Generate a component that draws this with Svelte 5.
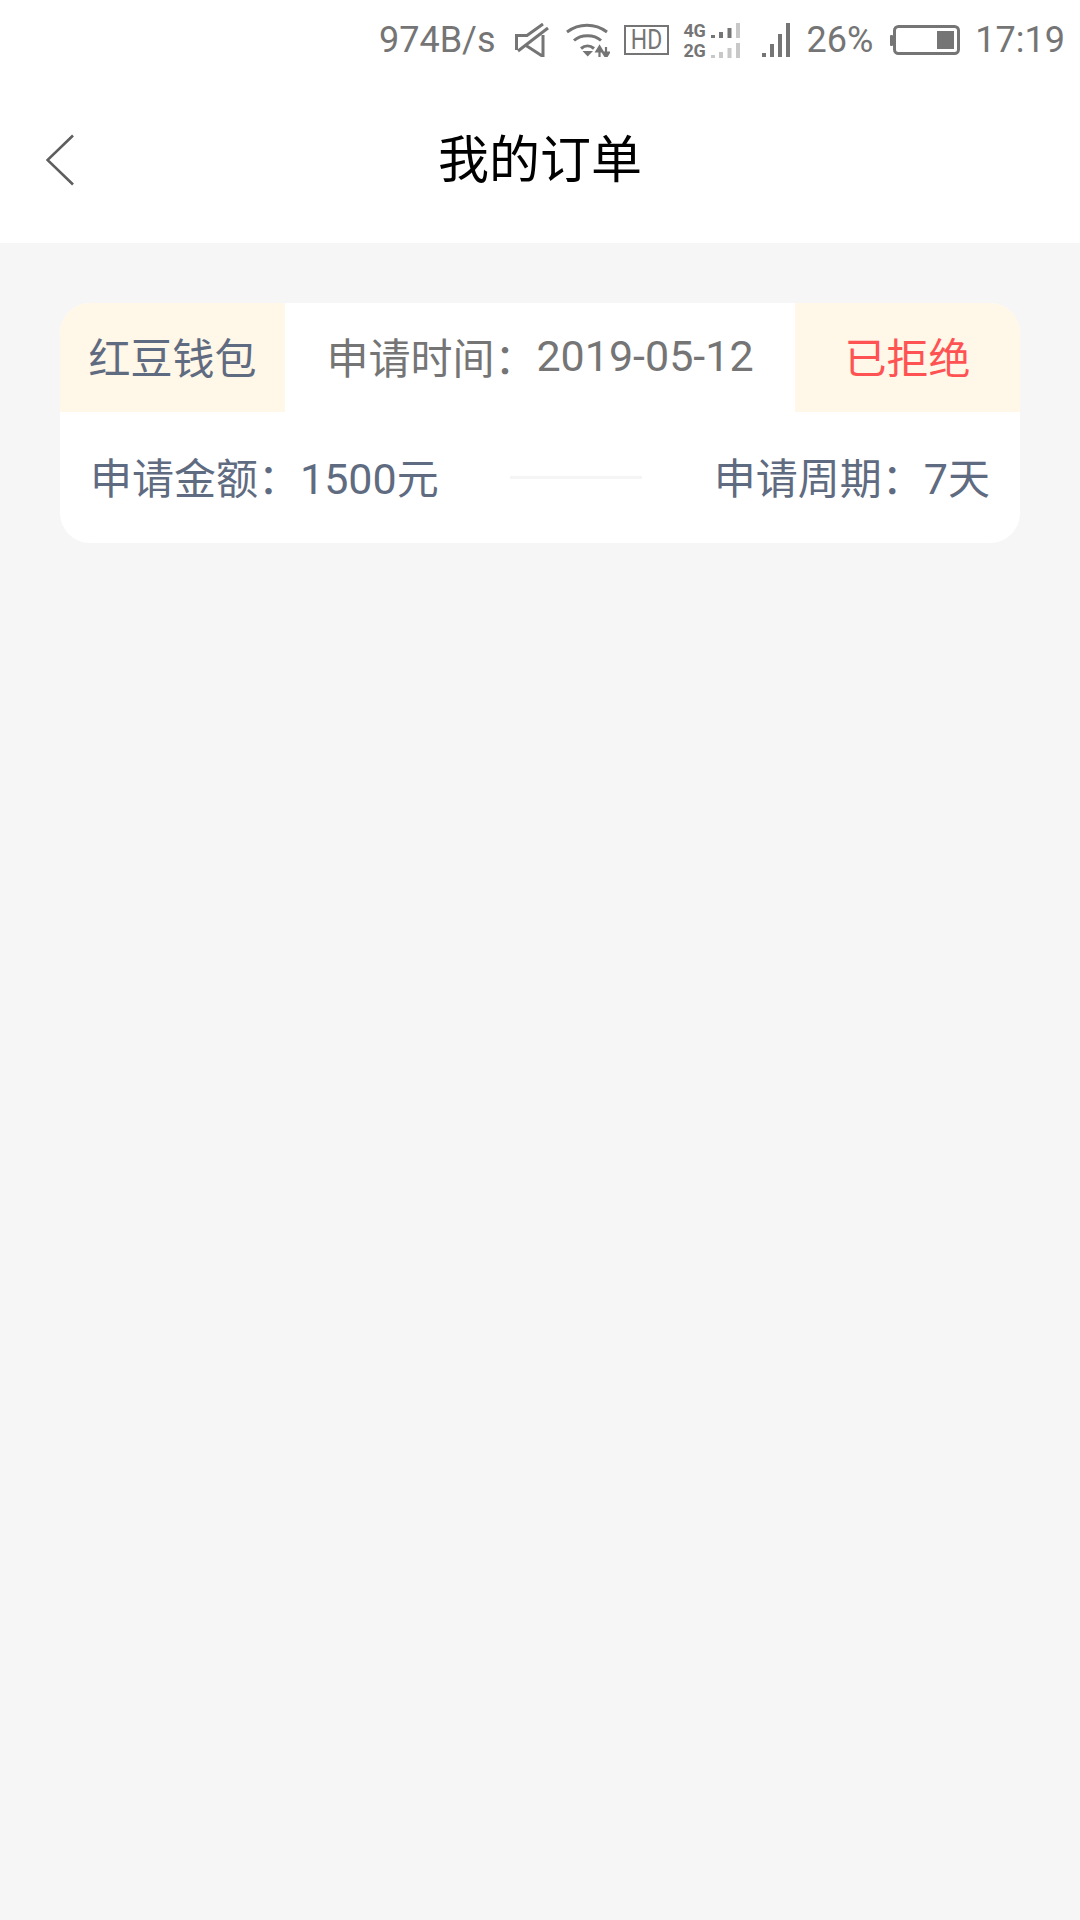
<script lang="ts">
  const order = {
    product: "红豆钱包",
    appliedLabel: "申请时间：",
    applied: "2019-05-12",
    status: "已拒绝",
    amountLabel: "申请金额：",
    amount: "1500",
    periodLabel: "申请周期：",
    period: "7",
  };
</script>

<div class="page">
  <header class="top">
    <div class="status-bar">
      <span class="speed">974B/s</span>
      <svg class="ico mute" width="34" height="34" viewBox="0 0 34 34" fill="none" stroke="#757575" stroke-width="3">
        <path d="M1.5 12.5H12L28 1" />
        <path d="M1.5 11V27" />
        <path d="M3 28L33 5" />
        <path d="M28 12V33.5L11 22.5" />
      </svg>
      <svg class="ico wifi" width="44" height="34" viewBox="0 0 44 34" fill="none" stroke="#757575" stroke-width="3">
        <path d="M1 9C13 0 29 0 41 9" />
        <path d="M8 17.5C15 11 28 11 35 17.5" />
        <path d="M15 25.5C19 22 24 22 28 25.5" />
        <path d="M16.5 28H27L21.7 33.5Z" fill="#757575" stroke="none" />
        <path d="M33.5 34V27M33.5 23.5L30.5 28.5H36.5ZM40 24V31M40 34.5L37 29.5H43Z" stroke-width="2.2" fill="#757575" />
      </svg>
      <span class="hd"><b>HD</b></span>
      <div class="sims">
        <div class="sim">
          <span class="net">4G</span>
          <svg width="29" height="15" viewBox="0 0 29 15">
            <rect x="0" y="12" width="4" height="3" fill="#757575" />
            <rect x="8" y="9" width="4" height="6" fill="#757575" />
            <rect x="16.500" y="5" width="4" height="10" fill="#757575" />
            <rect x="25" y="0" width="4" height="15" fill="#c8c8c8" />
          </svg>
        </div>
        <div class="sim">
          <span class="net">2G</span>
          <svg width="29" height="15" viewBox="0 0 29 15" fill="#c8c8c8">
            <rect x="0" y="12" width="4" height="3" />
            <rect x="8" y="9" width="4" height="6" />
            <rect x="16.500" y="5" width="4" height="10" />
            <rect x="25" y="0" width="4" height="15" />
          </svg>
        </div>
      </div>
      <svg class="ico signal" width="28" height="34" viewBox="0 0 28 34" fill="#757575">
        <rect x="0" y="30" width="4" height="4" />
        <rect x="8" y="21" width="4" height="13" />
        <rect x="16" y="11" width="4" height="23" />
        <rect x="24" y="0" width="4" height="34" />
      </svg>
      <span class="pct">26%</span>
      <svg class="ico battery" width="70" height="30" viewBox="0 0 70 30">
        <rect x="0" y="10" width="3" height="11" rx="1" fill="#757575" />
        <rect x="4.500" y="1.500" width="64" height="27" rx="4" fill="none" stroke="#757575" stroke-width="3" />
        <rect x="47" y="6" width="17" height="18" fill="#757575" />
      </svg>
      <span class="clock">17:19</span>
    </div>
    <nav class="nav">
      <svg class="back" width="30" height="52" viewBox="0 0 30 52" fill="none" stroke="#5e5e5e" stroke-width="2.6">
        <path d="M27 1.500L1.500 26L27 50.500" />
      </svg>
      <h1>我的订单</h1>
    </nav>
  </header>

  <main class="list">
    <section class="card">
      <div class="card-head">
        <div class="tag">{order.product}</div>
        <div class="date">{order.appliedLabel}<span class="num">{order.applied}</span></div>
        <div class="tag state">{order.status}</div>
      </div>
      <div class="card-body">
        <span>{order.amountLabel}<span class="num">{order.amount}</span>元</span>
        <i class="rule"></i>
        <span>{order.periodLabel}<span class="num">{order.period}</span>天</span>
      </div>
    </section>
  </main>
</div>

<style>
  :global(body) {
    margin: 0;
    background: #f6f6f6;
  }

  .page {
    min-height: 1920px;
    background: #f6f6f6;
    font-family: Roboto, "Noto Sans CJK SC", sans-serif;
  }

  .top { background: #fff; height: 243px; }

  /* Status bar */
  .status-bar {
    height: 78px;
    padding-right: 15px;
    display: flex;
    align-items: center;
    justify-content: flex-end;
    color: #757575;
    font-size: 36px;
    line-height: 1;
    box-sizing: border-box;
    padding-top: 2px;
  }
  .ico { flex: none; }
  .mute { margin-left: 19px; }
  .wifi { margin-left: 17px; }
  .hd {
    margin-left: 14px;
    width: 45px;
    height: 30px;
    box-sizing: border-box;
    border: 2.500px solid #757575;
    display: flex;
    align-items: center;
    justify-content: center;
  }
  .hd b {
    font-weight: 400;
    font-size: 27px;
    line-height: 25px;
    transform: scaleX(.85);
  }
  .sims { margin-left: 15px; display: flex; flex-direction: column; gap: 5px; }
  .sim { display: flex; align-items: flex-end; gap: 7px; height: 15px; }
  .net { font-size: 18px; font-weight: 700; line-height: 15px; width: 20px; white-space: nowrap; letter-spacing: -.4px; }
  .signal { margin-left: 22px; }
  .pct { margin-left: 17px; }
  .battery { margin-left: 17px; }
  .clock { margin-left: 15px; }

  /* Nav */
  .nav {
    height: 165px;
    position: relative;
    display: flex;
    align-items: center;
    justify-content: center;
  }
  .back { position: absolute; left: 46px; top: 56px; }
  h1 {
    margin: 0;
    font-size: 51px;
    font-weight: 400;
    color: #000;
    line-height: 1;
  }

  /* Order card */
  .list { padding: 60px 60px 0; }
  .card {
    background: #fff;
    border-radius: 30px;
    overflow: hidden;
    font-size: 42px;
    color: #5f6b80;
  }
  .card-head { display: flex; height: 109px; }
  .tag {
    width: 225px;
    background: #fff7e8;
    display: flex;
    align-items: center;
    justify-content: center;
    padding-bottom: 4px;
    box-sizing: border-box;
  }
  .date {
    flex: 1;
    color: #757575;
    display: flex;
    align-items: center;
    justify-content: center;
    padding-bottom: 4px;
  }
  .num { font-size: 43px; }
  .state { color: #ff5353; }
  .card-body {
    height: 131px;
    box-sizing: border-box;
    padding: 0 30px;
    display: flex;
    align-items: center;
    justify-content: space-between;
  }
  .card-body > span { margin-top: -4px; }
  .rule { width: 132px; height: 3px; background: #f5f5f5; }
</style>
